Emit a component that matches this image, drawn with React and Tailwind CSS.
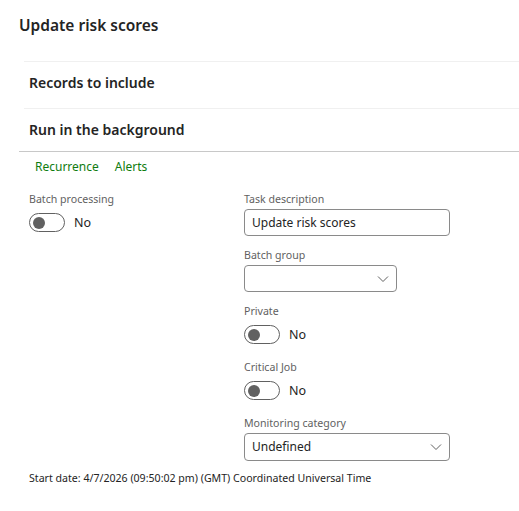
import React from 'react';

const font = "font-['Noto_Sans','Open_Sans',sans-serif]";

function Toggle() {
  return (
    <div className="flex items-center">
      <div className="w-[36px] h-[19px] rounded-full border border-[#616161] flex items-center pl-[3px]">
        <div className="w-[12px] h-[12px] rounded-full bg-[#616161]" />
      </div>
      <span className="ml-[9px] text-[12.5px] leading-[18px] text-[#242424]">No</span>
    </div>
  );
}

function Chevron() {
  return (
    <svg width="12" height="8" viewBox="0 0 12 8" fill="none">
      <path d="M1 1.5 L6 6.5 L11 1.5" stroke="#616161" strokeWidth="1" />
    </svg>
  );
}

function Field({ label, children }) {
  return (
    <div className="h-[56px]">
      <div className="text-[10.6px] leading-[14px] text-[#616161] mb-[3px]">{label}</div>
      {children}
    </div>
  );
}

function ToggleField({ label }) {
  return (
    <div className="h-[56px]">
      <div className="text-[10.6px] leading-[14px] text-[#616161] mb-[7px]">{label}</div>
      <Toggle />
    </div>
  );
}

export default function App() {
  return (
    <div className={`w-[519px] h-[511px] bg-white text-[#242424] ${font}`}>
      <div className="h-[61px] pl-[19px] pt-[14px]">
        <h1 className="text-[15.5px] leading-[22px] font-semibold">Update risk scores</h1>
      </div>

      <div className="ml-[24px] h-[47px] border-t border-[#f0f0f0] flex items-center pl-[5px] pb-[4px]">
        <span className="text-[14px] leading-[20px] font-semibold">Records to include</span>
      </div>
      <div className="ml-[24px] h-[43px] border-t border-[#f0f0f0] flex items-center pl-[5px]">
        <span className="text-[14px] leading-[20px] font-semibold">Run in the background</span>
      </div>

      <div className="ml-[19px] border-t border-[#c8c8c8]">
        <div className="flex gap-[16px] pl-[16px] pt-[6px] text-[12px] leading-[18px] text-[#107c10]">
          <span>Recurrence</span>
          <span>Alerts</span>
        </div>

        <div className="grid grid-cols-[215px_1fr] pl-[10px] pt-[16px]">
          <div>
            <ToggleField label="Batch processing" />
          </div>
          <div>
            <Field label="Task description">
              <div className="w-[206px] h-[27px] border border-[#8a8a8a] rounded-[4px] flex items-center pl-[7px] text-[12px]">
                Update risk scores
              </div>
            </Field>
            <Field label="Batch group">
              <div className="w-[153px] h-[27px] border border-[#8a8a8a] rounded-[4px] flex items-center justify-end pr-[7px]">
                <Chevron />
              </div>
            </Field>
            <ToggleField label="Private" />
            <ToggleField label="Critical Job" />
            <Field label="Monitoring category">
              <div className="w-[206px] h-[28px] border border-[#8a8a8a] rounded-[4px] flex items-center justify-between pl-[7px] pr-[7px] text-[12px]">
                <span>Undefined</span>
                <Chevron />
              </div>
            </Field>
          </div>
        </div>

        <div className="pl-[10px] -mt-[1px] text-[10.6px] leading-[14px] text-[#242424]">
          Start date: 4/7/2026 (09:50:02 pm) (GMT) Coordinated Universal Time
        </div>
      </div>
    </div>
  );
}
